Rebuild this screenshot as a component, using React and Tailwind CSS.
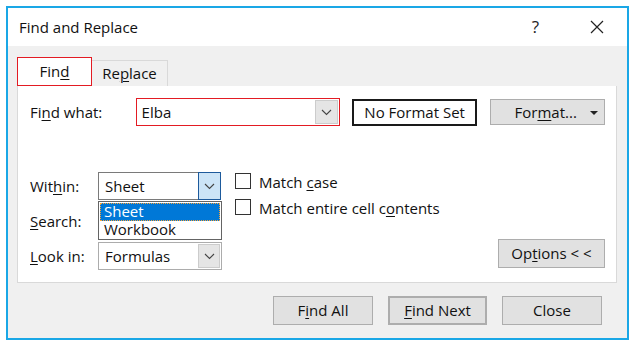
import React from 'react';

const font = { fontFamily: '"Open Sans", "Noto Sans", sans-serif' };

const U = ({ children }) => <span className="underline underline-offset-2 decoration-1">{children}</span>;

const Chevron = ({ className = '' }) => (
  <svg width="11" height="7" viewBox="0 0 11 7" className={className}>
    <path d="M1 1 L5.5 5.5 L10 1" fill="none" stroke="#444" strokeWidth="1.1" />
  </svg>
);

const Combo = ({ value, width, border, btn }) => (
  <div className={`flex h-[28px] ${width} bg-white border ${border}`}>
    <div className="flex-1 flex items-center pl-[6px] text-[15px] text-[#111]">{value}</div>
    <div className={`w-[23px] flex items-center justify-center ${btn}`}>
      <Chevron />
    </div>
  </div>
);

const Button = ({ children, className = '' }) => (
  <div className={`flex items-center justify-center bg-[#e1e1e1] border border-[#adadad] text-[15px] text-[#111] ${className}`}>
    {children}
  </div>
);

const Check = ({ children }) => (
  <div className="flex items-center h-[26px]">
    <div className="w-[16px] h-[16px] border border-[#333] bg-white" />
    <div className="ml-[8px] text-[15px] text-[#111] mt-[2px]">{children}</div>
  </div>
);

export default function App() {
  return (
    <div className="w-[635px] h-[347px] bg-white pt-[6px] pl-[6px]" style={font}>
      <div className="w-[623px] h-[334px] border-2 border-[#1aa7e6] flex flex-col">
        {/* title bar */}
        <div className="h-[38px] bg-white flex items-center pl-[11px] shrink-0">
          <div className="text-[15px] text-[#111] flex-1">Find and Replace</div>
          <div className="text-[17px] text-[#222] mr-[51px]">?</div>
          <svg width="14" height="14" viewBox="0 0 14 14" className="mr-[23px]">
            <path d="M1 1 L13 13 M13 1 L1 13" stroke="#222" strokeWidth="1.2" />
          </svg>
        </div>

        <div className="flex-1 bg-[#f0f0f0] flex flex-col">
          {/* tabs */}
          <div className="flex items-end pl-[9px] mt-[11px]">
            <div className="w-[75px] h-[29px] bg-white border border-[#e31b23] flex items-center justify-center text-[15px] text-[#111]">
              Fin<U>d</U>
            </div>
            <div className="w-[76px] h-[26px] border border-[#d9d9d9] border-b-0 border-l-0 flex items-center justify-center text-[15px] text-[#111]">
              Re<U>p</U>lace
            </div>
          </div>

          {/* panel */}
          <div className="ml-[9px] w-[600px] h-[197px] bg-white border border-[#d9d9d9] border-t-0 pl-[12px] pt-[12px] pr-[11px] relative">
            <div className="flex items-center">
              <div className="w-[106px] text-[15px] text-[#111]">Fi<U>n</U>d what:</div>
              <div className="flex h-[28px] w-[205px] bg-white border border-[#e31b23]">
                <div className="flex-1 flex items-center pl-[5px] text-[15px] text-[#111]">Elba</div>
                <div className="w-[23px] my-[1px] mr-[1px] bg-[#e5e5e5] border border-[#cccccc] flex items-center justify-center">
                  <Chevron />
                </div>
              </div>
              <div className="ml-[12px] w-[126px] h-[27px] border-2 border-[#1a1a1a] flex items-center justify-center text-[15px] text-[#111]">
                No Format Set
              </div>
              <Button className="ml-[13px] w-[115px] h-[26px] relative">
                <span className="mr-[4px]">For<U>m</U>at...</span>
                <svg width="8" height="5" viewBox="0 0 8 5" className="absolute right-[6px] top-[11px]">
                  <path d="M0 0 L8 0 L4 4 Z" fill="#222" />
                </svg>
              </Button>
            </div>

            <div className="flex mt-[46px]">
              {/* labels and selects */}
              <div className="flex flex-col gap-[7px] relative">
                <div className="flex items-center">
                  <div className="w-[68px] text-[15px] text-[#111]">Wit<U>h</U>in:</div>
                  <Combo value="Sheet" width="w-[123px]" border="border-[#7a7a7a]" btn="bg-[#cce4f7] border border-[#1d5a9c] h-[28px] -my-px -mr-px" />
                </div>
                <div className="flex items-center">
                  <div className="w-[68px] text-[15px] text-[#111]"><U>S</U>earch:</div>
                  <Combo value="" width="w-[123px]" border="border-[#7a7a7a]" btn="bg-[#e5e5e5]" />
                </div>
                <div className="flex items-center">
                  <div className="w-[68px] text-[15px] text-[#111]"><U>L</U>ook in:</div>
                  <div className="flex h-[28px] w-[124px] bg-white border border-[#acacac]">
                    <div className="flex-1 flex items-center pl-[6px] text-[15px] text-[#111]">Formulas</div>
                    <div className="w-[22px] my-[1px] mr-[1px] bg-[#e5e5e5] border border-[#cccccc] flex items-center justify-center">
                      <Chevron />
                    </div>
                  </div>
                </div>

                {/* open dropdown list */}
                <div className="absolute left-[68px] top-[29px] w-[124px] h-[39px] bg-white border border-[#646464] p-px flex flex-col">
                  <div className="h-[18px] bg-[#0078d7] border border-dotted border-[#f7a23a] flex items-center pl-[3px] text-[15px] text-white leading-[15px]">
                    Sheet
                  </div>
                  <div className="h-[18px] flex items-center pl-[4px] text-[15px] text-[#111] leading-[15px]">
                    Workbook
                  </div>
                </div>
              </div>

              {/* checkboxes */}
              <div className="ml-[13px] flex flex-col -mt-[4px]">
                <Check>Match <U>c</U>ase</Check>
                <Check>Match entire cell c<U>o</U>ntents</Check>
              </div>

              <div className="flex-1 flex items-end justify-end pb-[2px]">
                <Button className="w-[107px] h-[29px]">Op<U>t</U>ions &lt; &lt;</Button>
              </div>
            </div>
          </div>

          {/* bottom buttons */}
          <div className="flex justify-end gap-[15px] mt-[13px] pr-[25px]">
            <Button className="w-[100px] h-[29px]">F<U>i</U>nd All</Button>
            <Button className="w-[99px] h-[29px] border-2 border-[#0078d7]"><U>F</U>ind Next</Button>
            <Button className="w-[100px] h-[29px]">Close</Button>
          </div>
        </div>
      </div>
    </div>
  );
}
